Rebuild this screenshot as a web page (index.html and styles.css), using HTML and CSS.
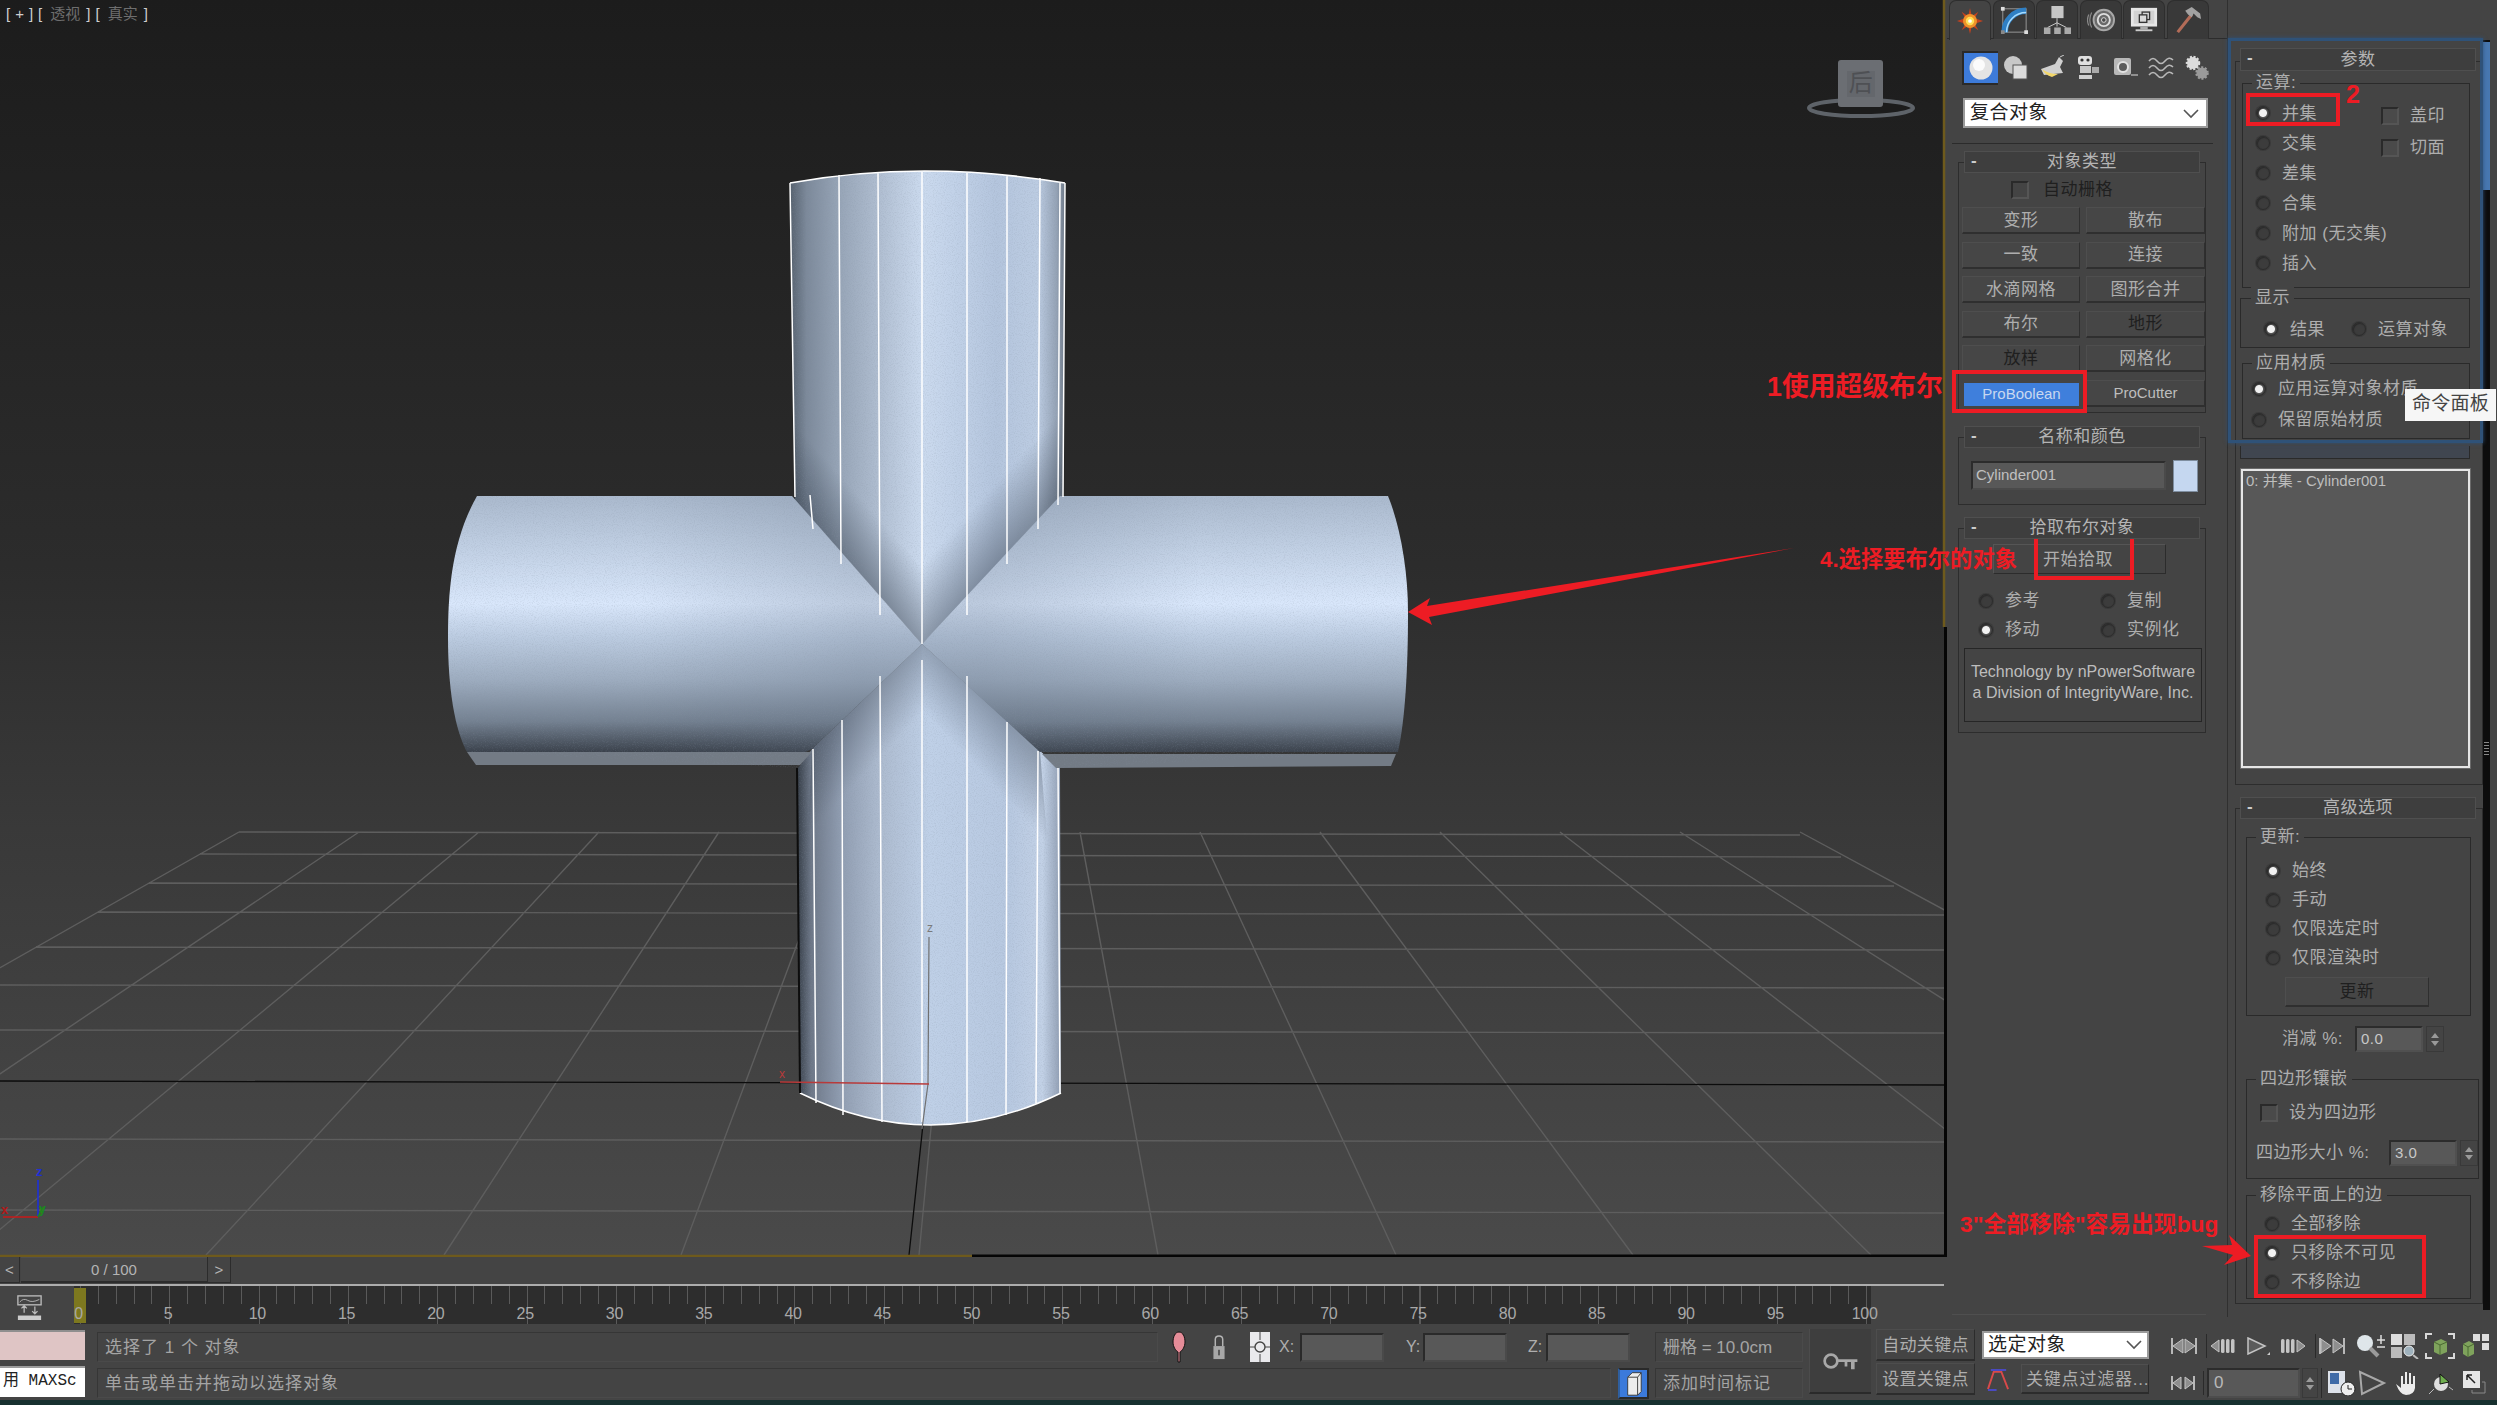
FILE: index.html
```html
<!DOCTYPE html>
<html lang="zh">
<head>
<meta charset="utf-8">
<title>3ds Max ProBoolean</title>
<link rel="stylesheet" href="styles.css">
</head>
<body>
<div class="app">
  <div class="top">
    <div class="left">
      <div class="viewport">
        <svg class="scene" viewBox="0 0 1947 1258" width="1947" height="1258">
          <defs>
            <linearGradient id="bg" x1="0" y1="0" x2="0" y2="1">
              <stop offset="0" stop-color="#1c1c1c"/><stop offset=".45" stop-color="#2c2c2c"/><stop offset=".66" stop-color="#393939"/><stop offset="1" stop-color="#4a4a4a"/>
            </linearGradient>
            <linearGradient id="vtop" gradientUnits="userSpaceOnUse" x1="790" y1="0" x2="1065" y2="0">
              <stop offset="0" stop-color="#56616e"/><stop offset=".06" stop-color="#7c899a"/><stop offset=".17" stop-color="#95a3b5"/><stop offset=".32" stop-color="#afbdd0"/><stop offset=".48" stop-color="#cbdaee"/><stop offset=".58" stop-color="#c3d3e9"/><stop offset=".75" stop-color="#b4c5dd"/><stop offset=".9" stop-color="#bccce2"/><stop offset=".97" stop-color="#94a2b5"/><stop offset="1" stop-color="#6f7a88"/>
            </linearGradient>
            <linearGradient id="vbot" gradientUnits="userSpaceOnUse" x1="798" y1="0" x2="1061" y2="0">
              <stop offset="0" stop-color="#39414b"/><stop offset=".05" stop-color="#6d7787"/><stop offset=".16" stop-color="#8f9cb0"/><stop offset=".3" stop-color="#abb9cd"/><stop offset=".5" stop-color="#bfd0e7"/><stop offset=".8" stop-color="#b7c8e0"/><stop offset=".93" stop-color="#c2d1e6"/><stop offset="1" stop-color="#8f9db2"/>
            </linearGradient>
            <linearGradient id="hcyl" gradientUnits="userSpaceOnUse" x1="0" y1="496" x2="0" y2="752">
              <stop offset="0" stop-color="#aab9cd"/><stop offset=".2" stop-color="#c0cfe3"/><stop offset=".42" stop-color="#d9e7fb"/><stop offset=".55" stop-color="#bccce1"/><stop offset=".72" stop-color="#9dacbf"/><stop offset=".88" stop-color="#748191"/><stop offset="1" stop-color="#3b424c"/>
            </linearGradient>
            <linearGradient id="shadeL" gradientUnits="userSpaceOnUse" x1="857" y1="570" x2="895" y2="536">
              <stop offset="0" stop-color="#2f3946" stop-opacity=".42"/><stop offset="1" stop-color="#2f3946" stop-opacity="0"/>
            </linearGradient>
            <linearGradient id="shadeR" gradientUnits="userSpaceOnUse" x1="990" y1="570" x2="950" y2="534">
              <stop offset="0" stop-color="#2f3946" stop-opacity=".42"/><stop offset="1" stop-color="#2f3946" stop-opacity="0"/>
            </linearGradient>
            <linearGradient id="shadeBL" gradientUnits="userSpaceOnUse" x1="857" y1="706" x2="895" y2="742">
              <stop offset="0" stop-color="#2f3946" stop-opacity=".34"/><stop offset="1" stop-color="#2f3946" stop-opacity="0"/>
            </linearGradient>
            <linearGradient id="shadeBR" gradientUnits="userSpaceOnUse" x1="990" y1="706" x2="952" y2="742">
              <stop offset="0" stop-color="#2f3946" stop-opacity=".34"/><stop offset="1" stop-color="#2f3946" stop-opacity="0"/>
            </linearGradient>
            <linearGradient id="armL" gradientUnits="userSpaceOnUse" x1="640" y1="0" x2="860" y2="0">
              <stop offset="0" stop-color="#59677a" stop-opacity="0"/><stop offset="1" stop-color="#59677a" stop-opacity=".22"/>
            </linearGradient>
            <linearGradient id="armR" gradientUnits="userSpaceOnUse" x1="1200" y1="0" x2="985" y2="0">
              <stop offset="0" stop-color="#59677a" stop-opacity="0"/><stop offset="1" stop-color="#59677a" stop-opacity=".22"/>
            </linearGradient>
            <filter id="grain" x="0" y="0" width="100%" height="100%">
              <feTurbulence type="fractalNoise" baseFrequency=".9" numOctaves="2" seed="3"/>
              <feColorMatrix values="0 0 0 0 .25  0 0 0 0 .3  0 0 0 0 .38  0 0 0 1.6 -.75"/>
            </filter>
            <clipPath id="cross"><path d="M790,183Q922,159 1065,183L1063,497L1388,496C1400,525 1408,570 1408,612C1408,670 1405,720 1398,752L1060,768L1061,1093Q930,1157 800,1093L798,768L467,752C455,730 448,690 448,637C448,590 452,540 477,496L795,497Z"/></clipPath>
          </defs>
          <rect class="bgfill" width="1944" height="1255"/>
          <path class="gridline" d="M239,832L-506,1255M359,832L-269,1255M479,832L-31,1255M599,832L206,1255M719,832L444,1255M839,832L681,1255M959,832L919,1255M1080,832L1158,1255M1200,832L1396,1255M1320,832L1633,1255M1440,832L1871,1255M1560,832L2108,1255M1680,832L2346,1255M1800,832L2583,1255M239,832L1800,835M200,854L1841,857M149,883L1894,886M98,912L1944,915M36,947L1944,950M0,985L1944,988M0,1030L1944,1033M0,1139L1944,1142M0,1210L1944,1213"/>
          <path class="axis" d="M0,1081L1944,1085M924,1115L909,1255"/>
          <path fill="url(#vtop)" d="M790,183Q922,159 1065,183L1063,500L922,644L795,500Z"/>
          <path fill="url(#shadeL)" d="M795,500L922,644L922,171L790,183Z"/>
          <path fill="url(#shadeR)" d="M1063,500L922,644L922,171L1065,183Z"/>
          <path fill="url(#vbot)" d="M812,749L922,644L1040,751L1060,768L1061,1093Q930,1157 800,1093L798,768Z"/>
          <path fill="url(#shadeBL)" d="M812,749L922,644L922,1000L800,1000Z"/>
          <path fill="url(#shadeBR)" d="M1040,751L922,644L922,1000L1060,1000Z"/>
          <path class="strip" d="M467,752L812,752L800,765L476,765Z"/>
          <path class="strip" d="M1042,754L1396,754L1391,766L1056,768Z"/>
          <path fill="url(#hcyl)" d="M477,496L792,496L922,644L812,749L805,752L467,752C455,730 448,690 448,637C448,590 452,540 477,496Z"/>
          <path fill="url(#hcyl)" d="M1060,496L1388,496C1400,525 1408,570 1408,612C1408,670 1405,720 1398,752L1040,752L922,644Z"/>
          <path fill="url(#armL)" d="M640,496L792,496L922,644L812,749L805,752L640,752Z"/>
          <path fill="url(#armR)" d="M1200,496L1060,496L922,644L1040,752L1200,752Z"/>
          <g clip-path="url(#cross)"><rect class="noise" x="440" y="160" width="980" height="980" filter="url(#grain)"/></g>
          <path class="wire" d="M790,183Q922,159 1065,183M790,183L795,497M1065,183L1063,497M810,495L813,529M839,175L841,564M878,173L880,615M922,171L922,644M967,173L967,615M1007,175L1007,564M1040,178L1038,529M1060,183L1058,505M813,749L816,1103M842,720L843,1115M880,676L882,1122M922,660L922,1122M967,676L967,1122M1007,722L1006,1115M1038,751L1036,1103M1058,768L1060,1094M800,1093Q930,1157 1061,1093"/>
          <path class="edge" d="M797,768L800,1093"/>
          <path class="gizmo" d="M929,937L928,1084L922,1129"/>
          <path class="gizmo-x" d="M780,1082L929,1084"/>
          <text class="gizmo-t" x="927" y="932">z</text>
          <text class="gizmo-tx" x="779" y="1078">x</text>
          <path class="ax-z" d="M38,1180V1217"/>
          <path class="ax-x" d="M3,1217H38"/>
          <path class="ax-y" d="M38,1217L43,1207"/>
          <text class="ax-tz" x="36" y="1176">z</text>
          <text class="ax-tx" x="1" y="1214">x</text>
          <text class="ax-ty" x="39" y="1213">y</text>
          <ellipse class="ring" cx="1861" cy="108" rx="52" ry="8"/>
          <rect class="cube" x="1838" y="60" width="45" height="47" rx="3"/>
          <rect class="cube-in" x="1847" y="71" width="28" height="26"/>
          <text class="cube-t" x="1861" y="91">后</text>
          <path class="vp-gold" d="M0,1256H972M1944,0V627"/>
          <path class="vp-black" d="M972,1256H1947M1945.5,627V1257"/>
        </svg>
        <div class="vp-label"><span class="vb">[</span><span class="vb">+</span><span class="vb">]</span><span class="vb">[</span><span class="dim">透视</span><span class="vb">]</span><span class="vb">[</span><span class="dim">真实</span><span class="vb">]</span></div>
      </div>
      <div class="slider">
        <div class="sl-btn sl-l">&lt;</div>
        <div class="sl-track">0 / 100</div>
        <div class="sl-btn sl-r">&gt;</div>
      </div>
      <div class="timeline">
        <div class="tl-icon">
          <svg class="i-tl" viewBox="0 0 28 28"><rect x="1" y="1" width="26" height="10" fill="none" stroke="#bbb" stroke-width="1.5"/><path d="M3,8Q7,3 12,6T25,5" fill="none" stroke="#bbb"/><path d="M8,20V13M5,15L8,12L11,15M20,13V20M17,18L20,21L23,18" fill="none" stroke="#bbb" stroke-width="1.4"/><rect x="1" y="23" width="26" height="5" fill="#ccc"/></svg>
        </div>
        <div class="tl-track">
          <div class="tl-handle"></div>
          <div class="tl-nums"><span>0</span><span>5</span><span>10</span><span>15</span><span>20</span><span>25</span><span>30</span><span>35</span><span>40</span><span>45</span><span>50</span><span>55</span><span>60</span><span>65</span><span>70</span><span>75</span><span>80</span><span>85</span><span>90</span><span>95</span><span>100</span></div>
        </div>
      </div>
    </div>

    <div class="col1">
      <div class="tabs">
        <div class="tab on"><svg class="i-tab" viewBox="0 0 30 30"><polygon points="15,1 17,10 24,5 20,12 29,15 20,18 24,25 17,20 15,29 13,20 6,25 10,18 1,15 10,12 6,5 13,10" fill="#c4421e"/><circle cx="15" cy="15" r="7.5" fill="#f0922a"/><circle cx="15" cy="15" r="4.5" fill="#ffdf55"/><circle cx="15" cy="15" r="2" fill="#fff"/></svg></div>
        <div class="tab"><svg class="i-tab" viewBox="0 0 30 30"><rect x="3" y="3" width="25" height="25" fill="none" stroke="#9c9c9c"/><path d="M5,28A23,23 0 0 1 28,5" fill="none" stroke="#2f7fc4" stroke-width="7"/><path d="M7,28A21,21 0 0 1 28,7" fill="none" stroke="#a6dcff" stroke-width="1.6"/><rect x="1" y="1" width="4" height="4" fill="#ddd"/><rect x="26" y="26" width="4" height="4" fill="#ddd"/><rect x="1" y="26" width="4" height="4" fill="#888"/></svg></div>
        <div class="tab"><svg class="i-tab" viewBox="0 0 30 30"><rect x="9" y="0" width="13" height="13" fill="#c6c6c6"/><path d="M15,13V22M15,18L5,23M15,18L25,23" stroke="#d0d0d0" fill="none"/><rect x="1" y="23" width="7" height="7" fill="#aaa"/><rect x="12" y="23" width="7" height="7" fill="#aaa"/><rect x="23" y="23" width="7" height="7" fill="#aaa"/></svg></div>
        <div class="tab"><svg class="i-tab" viewBox="0 0 30 30"><circle cx="18" cy="15" r="11" fill="#6a6a6a" stroke="#a8a8a8" stroke-width="2"/><circle cx="18" cy="15" r="6.5" fill="none" stroke="#dedede" stroke-width="2"/><circle cx="18" cy="15" r="2.5" fill="#4a4a4a" stroke="#ddd"/><path d="M5,7Q1,15 5,23M2,9Q-1,15 2,21" fill="none" stroke="#8a8a8a" stroke-width="1.3"/></svg></div>
        <div class="tab"><svg class="i-tab" viewBox="0 0 30 30"><rect x="1" y="2" width="28" height="20" fill="#e6e6e6"/><rect x="4" y="5" width="22" height="14" fill="#d2d2d2"/><rect x="13" y="6.500" width="8" height="8" fill="none" stroke="#333" stroke-width="1.4"/><rect x="10" y="9.500" width="8" height="8" fill="#d8d8d8" stroke="#333" stroke-width="1.4"/><rect x="11" y="22" width="8" height="3" fill="#aaa"/><rect x="6" y="25" width="18" height="2" fill="#ccc"/></svg></div>
        <div class="tab"><svg class="i-tab" viewBox="0 0 30 30"><path d="M4,28L19,9" stroke="#b36c58" stroke-width="3.4" fill="none"/><path d="M12,5L19,1L28,8L29,14L25,12L21,8L19,12L15,9Z" fill="#a2a2a2"/></svg></div>
      </div>

      <div class="objrow">
        <div class="obj active"><svg class="i-obj" viewBox="0 0 26 26"><circle cx="13" cy="13" r="11.500" fill="#e4e4e4"/><circle cx="11" cy="10" r="6" fill="#fbfbfb"/></svg></div>
        <div class="obj"><svg class="i-obj" viewBox="0 0 26 26"><circle cx="10" cy="10" r="9" fill="#c8c8c8"/><rect x="10" y="10" width="14" height="14" fill="#dcdcdc" stroke="#555"/></svg></div>
        <div class="obj"><svg class="i-obj" viewBox="0 0 26 26"><path d="M20,2L24,6L21,12L24,18L5,20L2,14L16,9Z" fill="#d0d0d0"/><path d="M3,14Q9,19 19,19L13,22Q6,20 3,14Z" fill="#f2d66a"/><path d="M21,2L25,0" stroke="#ccc"/></svg></div>
        <div class="obj"><svg class="i-obj" viewBox="0 0 26 26"><rect x="3" y="1" width="14" height="9" rx="3" fill="#e0e0e0"/><circle cx="7" cy="5" r="1.600" fill="#333"/><circle cx="13" cy="5" r="1.600" fill="#333"/><rect x="5" y="11" width="11" height="7" fill="#c8c8c8"/><rect x="17" y="12" width="7" height="6" fill="#aaa"/><rect x="4" y="20" width="13" height="4" fill="#cfcfcf"/></svg></div>
        <div class="obj"><svg class="i-obj" viewBox="0 0 26 26"><rect x="2" y="3" width="17" height="17" rx="2" fill="#b8b8b8"/><circle cx="11" cy="12" r="5" fill="#5c5c5c" stroke="#e2e2e2" stroke-width="2"/><path d="M19,20H26" stroke="#aaa" stroke-width="1.500"/></svg></div>
        <div class="obj"><svg class="i-obj" viewBox="0 0 26 26"><path d="M1,6Q5,1 9,6T17,6T25,5M1,13Q5,8 9,13T17,13T25,12M1,20Q5,15 9,20T17,20T25,19" fill="none" stroke="#b8b8b8" stroke-width="1.600"/></svg></div>
        <div class="obj"><svg class="i-obj" viewBox="0 0 26 26"><circle cx="9" cy="8" r="6" fill="#dcdcdc" stroke="#dcdcdc" stroke-width="2.500" stroke-dasharray="2 1.500"/><circle cx="18" cy="18" r="5.500" fill="#9a9a9a" stroke="#9a9a9a" stroke-width="2.500" stroke-dasharray="2 1.500"/></svg></div>
      </div>

      <div class="select sel-main"><span>复合对象</span><svg class="chev" viewBox="0 0 16 10"><path d="M1,1L8,8L15,1" fill="none" stroke="#555" stroke-width="1.600"/></svg></div>
      <div class="hr"></div>

      <div class="rollout r-a">
        <div class="rhead"><b>-</b><span>对象类型</span></div>
        <div class="rbody rb-types">
          <div class="row-auto"><i class="check dark"></i><span class="dk">自动栅格</span></div>
          <div class="btn-grid">
            <div class="btn">变形</div><div class="btn">散布</div>
            <div class="btn">一致</div><div class="btn">连接</div>
            <div class="btn">水滴网格</div><div class="btn">图形合并</div>
            <div class="btn">布尔</div><div class="btn dk">地形</div>
            <div class="btn dk">放样</div><div class="btn">网格化</div>
            <div class="btn blue">ProBoolean</div><div class="btn light">ProCutter</div>
          </div>
        </div>
      </div>

      <div class="rollout r-b">
        <div class="rhead"><b>-</b><span>名称和颜色</span></div>
        <div class="rbody rb-name">
          <div class="namebox">Cylinder001</div>
          <div class="swatch"></div>
        </div>
      </div>

      <div class="rollout r-c">
        <div class="rhead"><b>-</b><span>拾取布尔对象</span></div>
        <div class="rbody rb-pick">
          <div class="pickbtn">开始拾取</div>
          <div class="pick-grid">
            <div class="opt"><i class="radio"></i><span>参考</span></div>
            <div class="opt"><i class="radio"></i><span>复制</span></div>
            <div class="opt"><i class="radio on"></i><span>移动</span></div>
            <div class="opt"><i class="radio"></i><span>实例化</span></div>
          </div>
          <div class="techbox"><p>Technology by nPowerSoftware</p><p>a Division of IntegrityWare, Inc.</p></div>
        </div>
      </div>
      <div class="col1-foot"></div>
    </div>

    <div class="col2">
      <div class="col2-main">
        <div class="rollout r-p">
          <div class="rhead"><b>-</b><span>参数</span></div>
          <div class="rbody rb-params">
            <div class="group g-op">
              <div class="legend">运算:</div>
              <div class="g-split">
                <div class="g-list">
                  <div class="opt h30"><i class="radio on"></i><span>并集</span></div>
                  <div class="opt h30"><i class="radio"></i><span>交集</span></div>
                  <div class="opt h30"><i class="radio"></i><span>差集</span></div>
                  <div class="opt h30"><i class="radio"></i><span>合集</span></div>
                  <div class="opt h30"><i class="radio"></i><span>附加 (无交集)</span></div>
                  <div class="opt h30"><i class="radio"></i><span>插入</span></div>
                </div>
                <div class="g-checks">
                  <div class="chk"><i class="check"></i><span>盖印</span></div>
                  <div class="chk"><i class="check"></i><span>切面</span></div>
                </div>
              </div>
            </div>
            <div class="group g-show">
              <div class="legend">显示</div>
              <div class="g-inline">
                <div class="opt"><i class="radio on"></i><span>结果</span></div>
                <div class="opt"><i class="radio"></i><span>运算对象</span></div>
              </div>
            </div>
            <div class="group g-mat">
              <div class="legend">应用材质</div>
              <div class="opt h31"><i class="radio on"></i><span>应用运算对象材质</span></div>
              <div class="opt h31"><i class="radio"></i><span>保留原始材质</span></div>
            </div>
            <div class="g-stub"></div>
            <div class="listbox">0: 并集 - Cylinder001</div>
          </div>
        </div>

        <div class="rollout r-adv">
          <div class="rhead"><b>-</b><span>高级选项</span></div>
          <div class="rbody rb-adv">
            <div class="group g-upd">
              <div class="legend">更新:</div>
              <div class="g-rows">
                <div class="opt h29"><i class="radio on"></i><span>始终</span></div>
                <div class="opt h29"><i class="radio"></i><span>手动</span></div>
                <div class="opt h29"><i class="radio"></i><span>仅限选定时</span></div>
                <div class="opt h29"><i class="radio"></i><span>仅限渲染时</span></div>
              </div>
              <div class="btn upd dk">更新</div>
            </div>
            <div class="spinrow sr-dec">
              <span class="sp-l">消减 %:</span>
              <div class="spin-in">0.0</div>
              <div class="spin-ar"><i class="up"></i><i class="dn"></i></div>
            </div>
            <div class="group g-quad">
              <div class="legend">四边形镶嵌</div>
              <div class="chk quadchk"><i class="check"></i><span>设为四边形</span></div>
              <div class="spinrow sr-quad">
                <span class="sp-l2">四边形大小 %:</span>
                <div class="spin-in">3.0</div>
                <div class="spin-ar"><i class="up"></i><i class="dn"></i></div>
              </div>
            </div>
            <div class="group g-rem">
              <div class="legend">移除平面上的边</div>
              <div class="g-rows2">
                <div class="opt h29"><i class="radio"></i><span>全部移除</span></div>
                <div class="opt h29"><i class="radio on"></i><span>只移除不可见</span></div>
                <div class="opt h29"><i class="radio"></i><span>不移除边</span></div>
              </div>
            </div>
          </div>
        </div>
      </div>
      <div class="scroll"><div class="thumb"></div><div class="grip"></div></div>
    </div>
  </div>

  <div class="status">
    <div class="macro"><div class="macro-pink"></div><div class="macro-white"><span>用 MAXSc</span></div></div>
    <div class="vsep"></div>
    <div class="st-main">
      <div class="st-row">
        <div class="stbox st-msg">选择了 1 个 对象</div>
        <svg class="i-pin" viewBox="0 0 14 32"><path d="M7,1C11,1 13,6 13,11C13,16 10,20 8,21V31H6V21C4,20 1,16 1,11C1,6 3,1 7,1Z" fill="#e58c98" stroke="#111"/></svg>
        <svg class="i-lock" viewBox="0 0 14 28"><path d="M3,13V6C3,1 11,1 11,6V13" fill="none" stroke="#b4b4b4" stroke-width="1.600"/><rect x="1" y="13" width="12" height="14" fill="#a8a8a8"/><rect x="6" y="17" width="2" height="6" fill="#555"/></svg>
        <svg class="i-sel" viewBox="0 0 20 30"><rect width="20" height="30" fill="#e9e9ec"/><circle cx="10" cy="15" r="5" fill="none" stroke="#444" stroke-width="1.400"/><path d="M10,0V8M10,22V30M0,15H5M15,15H20" stroke="#444"/></svg>
        <span class="xyz xl">X:</span><div class="xyzin"></div>
        <span class="xyz yl">Y:</span><div class="xyzin"></div>
        <span class="xyz zl">Z:</span><div class="xyzin"></div>
        <div class="stbox st-grid">栅格 = 10.0cm</div>
      </div>
      <div class="st-row st-row2">
        <div class="stbox st-prompt">单击或单击并拖动以选择对象</div>
        <div class="tagbtn"><svg class="i-tag" viewBox="0 0 20 30"><path d="M3,8L8,3H18V24L14,28H3Z" fill="#ececec" stroke="#333"/><path d="M3,8H14V28M14,8L18,3" fill="none" stroke="#333"/></svg></div>
        <div class="stbox st-tag">添加时间标记</div>
      </div>
    </div>
    <div class="keybtn"><svg class="i-key" viewBox="0 0 40 22"><circle cx="9" cy="11" r="7" fill="none" stroke="#a8a8a8" stroke-width="3"/><path d="M16,9H38V12H35V20H31V12H27V17H24V12H16Z" fill="#a8a8a8"/></svg></div>
    <div class="keycol">
      <div class="keylbl">自动关键点</div>
      <div class="keylbl">设置关键点</div>
    </div>
    <div class="filtercol">
      <div class="select sel-key"><span>选定对象</span><svg class="chev" viewBox="0 0 16 10"><path d="M1,1L8,8L15,1" fill="none" stroke="#555" stroke-width="1.600"/></svg></div>
      <div class="filter-row">
        <svg class="i-curve" viewBox="0 0 28 24"><path d="M3,22L9,4H17L24,22" fill="none" stroke="#d84a4a" stroke-width="2"/><path d="M6,2H22M3,23H12" stroke="#4a4ac0" stroke-width="2"/></svg>
        <div class="filterbtn">关键点过滤器...</div>
      </div>
    </div>
    <div class="pb">
      <div class="pb-row">
        <svg class="pb1" viewBox="0 0 26 18"><path d="M1,1V17M25,1V17" stroke="#b8b8b8" stroke-width="2"/><path d="M2,9L12,2V16ZM24,9L14,2V16Z" fill="#8e8e8e" stroke="#c4c4c4"/></svg>
        <div class="pbsep"></div>
        <svg class="pb1" viewBox="0 0 26 18"><path d="M1,9L9,3V15Z" fill="#8e8e8e" stroke="#c4c4c4"/><rect x="11" y="2" width="3.500" height="14" rx="1.500" fill="#c4c4c4"/><rect x="16" y="2" width="3.500" height="14" rx="1.500" fill="#c4c4c4"/><rect x="21" y="2" width="3.500" height="14" rx="1.500" fill="#c4c4c4"/></svg>
        <svg class="pb1" viewBox="0 0 26 18"><path d="M3,1L20,9L3,17Z" fill="#5c5c5c" stroke="#c4c4c4" stroke-width="1.500"/><path d="M25,15L22,18H25Z" fill="#ccc"/></svg>
        <svg class="pb1" viewBox="0 0 26 18"><rect x="1" y="2" width="3.500" height="14" rx="1.500" fill="#c4c4c4"/><rect x="6" y="2" width="3.500" height="14" rx="1.500" fill="#c4c4c4"/><rect x="11" y="2" width="3.500" height="14" rx="1.500" fill="#c4c4c4"/><path d="M17,3L25,9L17,15Z" fill="#8e8e8e" stroke="#c4c4c4"/></svg>
        <div class="pbsep"></div>
        <svg class="pb1 pb-last" viewBox="0 0 26 18"><path d="M1,1V17M25,1V17" stroke="#b8b8b8" stroke-width="2"/><path d="M2,2L12,9L2,16ZM24,9L14,2V16Z" fill="#8e8e8e" stroke="#c4c4c4"/></svg>
        <svg class="pb2" viewBox="0 0 30 26"><circle cx="10" cy="10" r="8" fill="#dfe6ea"/><path d="M15,15L23,23" stroke="#9a9a9a" stroke-width="4"/><path d="M22,7H30M26,2V11M22,14H30" stroke="#ddd" stroke-width="1.500"/></svg>
        <svg class="pb2" viewBox="0 0 30 26"><rect x="1" y="1" width="11" height="11" fill="#ddd"/><rect x="14" y="1" width="11" height="11" fill="#bbb"/><rect x="1" y="14" width="11" height="11" fill="#bbb"/><circle cx="19" cy="18" r="5" fill="#9fb2bd" stroke="#eee"/><path d="M23,22L28,26" stroke="#bbb" stroke-width="2"/></svg>
        <svg class="pb2" viewBox="0 0 30 26"><path d="M1,6V1H7M23,1H29V6M1,20V25H7M23,25H29V20" fill="none" stroke="#d8d8d8" stroke-width="2"/><path d="M9,9L16,6L22,9V19L15,22L9,19Z" fill="#7fa35c"/><path d="M9,9L15,12L22,9M15,12V22" stroke="#4a6a32" fill="none"/></svg>
        <svg class="pb2" viewBox="0 0 30 26"><rect x="13" y="1" width="7" height="7" fill="#ddd"/><rect x="22" y="1" width="7" height="7" fill="#ddd"/><rect x="22" y="10" width="7" height="7" fill="#ddd"/><path d="M3,11L9,8L14,11V21L8,24L3,21Z" fill="#7fa35c"/><path d="M3,11L8,14L14,11M8,14V24" stroke="#4a6a32" fill="none"/></svg>
      </div>
      <div class="pb-row pb-row2">
        <svg class="pb3" viewBox="0 0 24 16"><path d="M1,1V15M23,1V15" stroke="#b8b8b8" stroke-width="2"/><path d="M2,8L10,2V14ZM22,8L14,2V14Z" fill="#8e8e8e" stroke="#c4c4c4"/></svg>
        <div class="pbsep"></div>
        <div class="frame">0</div>
        <div class="spin-ar sp-frame"><i class="up"></i><i class="dn"></i></div>
        <div class="pbsep sep2"></div>
        <svg class="pb2 pb-first" viewBox="0 0 30 26"><rect x="1" y="1" width="17" height="22" fill="#dde2ea"/><rect x="3" y="3" width="9" height="11" fill="#3f6ba8"/><circle cx="21" cy="19" r="7" fill="#eee" stroke="#222"/><path d="M21,15V19H25" stroke="#222" fill="none"/></svg>
        <svg class="pb2" viewBox="0 0 30 26"><path d="M3,2L27,13L5,24Z" fill="none" stroke="#a8a8a8" stroke-width="2"/></svg>
        <svg class="pb2" viewBox="0 0 30 26"><path d="M4,14L9,18V6H11V14H13V2H15V14H17V3H19V14H21V6H23V18Q22,25 14,25Q8,25 4,14Z" fill="#ececec"/></svg>
        <svg class="pb2" viewBox="0 0 30 26"><circle cx="14" cy="14" r="7" fill="#dedede"/><path d="M13,4L22,12L13,14Z" fill="#6fae4e" stroke="#111"/><path d="M2,24L7,19M26,20L22,17" stroke="#bbb"/></svg>
        <svg class="pb2" viewBox="0 0 30 26"><rect x="1" y="1" width="17" height="17" fill="#e6e6e6"/><path d="M5,5L13,13M5,5H10M5,5V10" stroke="#222" stroke-width="1.500" fill="none"/><path d="M20,12H23V23H10V20" fill="none" stroke="#888"/></svg>
      </div>
    </div>
  </div>
  <div class="strip-bottom"></div>

  <div class="glow"></div>
  <div class="tooltip">命令面板</div>
  <div class="mark m-bool"></div>
  <div class="mark m-pick"></div>
  <div class="mark m-union"></div>
  <div class="mark m-rem"></div>
  <div class="note n1">1使用超级布尔</div>
  <div class="note n2">2</div>
  <div class="note n3">3"全部移除"容易出现bug</div>
  <div class="note n4">4.选择要布尔的对象</div>
  <svg class="arrows" viewBox="0 0 2497 1405" width="2497" height="1405">
    <path d="M1408,612L1430,598L1427,606L1794,548L1429,617L1432,625Z"/>
    <path d="M2251,1256L2229,1235L2232,1245L2202,1246L2233,1255L2224,1265Z"/>
  </svg>
</div>
</body>
</html>
```
FILE: styles.css
```css
*{box-sizing:border-box}
html,body{margin:0;padding:0;background:#444}
body{font-family:"Liberation Sans","Noto Sans CJK SC",sans-serif;font-size:17px;letter-spacing:.5px;color:#aeaeae;line-height:1.2}
.app{position:relative;width:2497px;height:1405px;overflow:hidden;background:#444}
i{display:block;flex:none}
svg{display:block;flex:none}

/* overall */
.top{display:flex;height:1326px}
.left{width:1947px;flex:none}
.col1{width:280px;flex:none;position:relative}
.col2{width:270px;flex:none;display:flex;border-left:1px solid #303030;height:1317px}
.col2-main{width:254px;flex:none}

/* viewport */
.viewport{position:relative;height:1257px;overflow:hidden}
.scene{position:absolute;left:0;top:0}
.bgfill{fill:url(#bg)}
.gridline{fill:none;stroke:#5e5e5e;stroke-width:1.4}
.axis{fill:none;stroke:#0c0c0c;stroke-width:1.3}
.strip{fill:#737b85}
.wire{fill:none;stroke:#fff;stroke-width:1.500}
.edge{fill:none;stroke:#0d0d0d;stroke-width:2}
.noise{opacity:.32}
.gizmo{fill:none;stroke:#707070;stroke-width:1.200}
.gizmo-x{fill:none;stroke:#b83a3a;stroke-width:1.500}
.gizmo-t{fill:#7a7a7a;font-size:12px}
.gizmo-tx{fill:#b83a3a;font-size:12px}
.ax-z{stroke:#1a2ee0;stroke-width:1.500}
.ax-x{stroke:#c81818;stroke-width:1.500}
.ax-y{stroke:#1c8a1c;stroke-width:1.500}
.ax-tz{fill:#2030d8;font-size:13px;font-weight:700}
.ax-tx{fill:#b01818;font-size:13px;font-weight:700}
.ax-ty{fill:#1c8a1c;font-size:12px;font-weight:700}
.ring{fill:#1c1c1c;stroke:#5e6369;stroke-width:4}
.cube{fill:#6b6e73}
.cube-in{fill:#64676c}
.cube-t{fill:#4e5054;font-size:24px;text-anchor:middle}
.vp-gold{fill:none;stroke:#6e5a1c;stroke-width:2.500}
.vp-black{fill:none;stroke:#050505;stroke-width:3}
.vp-label{position:absolute;left:6px;top:5px;display:flex;font-size:15px;line-height:18px;letter-spacing:0;color:#cfcfcf}
.vb{margin-right:5px}
.dim{color:#6e6e6e;letter-spacing:0;margin:0 6px 0 3px}

/* time slider */
.slider{display:flex;height:27px;padding-bottom:1px;font-size:15px;letter-spacing:0;border-bottom:0}
.sl-btn{border-right:1px solid #2c2c2c;border-bottom:1px solid #2c2c2c;display:flex;align-items:center;justify-content:center;color:#b4b4b4;font-size:15px}
.sl-l{width:20px}
.sl-r{width:24px;border-left:1px solid #2c2c2c}
.sl-track{width:186px;margin-left:1px;border-bottom:2px solid #2c2c2c;border-top:1px solid #4e4e4e;display:flex;align-items:center;justify-content:center;background:#474747;color:#b4b4b4}

/* timeline */
.timeline{display:flex;height:42px;border-top:2px solid #adadad;width:1944px}
.tl-icon{width:74px;flex:none;padding:9px 0 0 16px}
.i-tl{width:27px;height:25px}
.tl-track{position:relative;width:1797px;flex:none;height:38px;background:
  repeating-linear-gradient(90deg,#5a5a5a 0 1px,transparent 1px 89.3px) 5.700px 0/100% 100% no-repeat,
  repeating-linear-gradient(90deg,#5a5a5a 0 1px,transparent 1px 17.860px) 5.700px 0/100% 18px no-repeat,
  #2d2d2d}
.tl-handle{position:absolute;left:0;top:2px;width:12px;height:35px;background:#7d781f}
.tl-nums{position:relative;display:flex;margin-left:-40px;padding-top:18px;font-size:16px;letter-spacing:-.3px;line-height:20px;color:#a8a8a8}
.tl-nums span{width:89.300px;flex:none;text-align:center}

/* tabs */
.tabs{display:flex;gap:1.500px;height:39px;padding-left:2px;border-bottom:1px solid #2c2c2c;margin-left:0}
.tab{width:42px;height:39px;background:#393939;border-radius:7px 7px 0 0;border:1px solid #2e2e2e;border-bottom:0;display:flex;align-items:center;justify-content:center}
.tab.on{background:#444;height:40px;position:relative}
.i-tab{width:28px;height:28px}

/* object row */
.objrow{display:flex;margin:12px 0 0 15px;height:34px}
.obj{width:36.200px;height:34px;flex:none;display:flex;align-items:center;justify-content:center}
.obj.active{background:#3d7bda;border:2px solid #2a2a2a;border-right:0;width:36px}
.i-obj{width:26px;height:26px}

/* select */
.select{background:#fff;border:2px solid #9a9a9a;color:#222;display:flex;align-items:center;justify-content:space-between;padding:1px 7px 0 5px;font-size:19px;letter-spacing:.5px}
.sel-main{width:245px;height:30px;margin:13px 0 0 16px}
.chev{width:16px;height:10px}
.hr{height:1px;margin:15px 0 0 5px;width:261px;background:#2b2b2b}

/* rollouts */
.rollout{position:relative}
.r-a{margin:7px 0 0 11px;width:248px}
.r-b{margin:13px 0 0 11px;width:248px}
.r-c{margin:12px 0 0 11px;width:248px}
.rhead{position:relative;z-index:1;margin-left:6px;width:236px;height:22px;background:#3e3e3e;border:1px solid #4f4f4f;display:flex;align-items:center;justify-content:center;font-size:17px;color:#b4b4b4;padding-top:1px}
.rhead b{position:absolute;left:6px;top:0;line-height:17px;font-weight:700;color:#ccc}
.rbody{margin-top:-11px;border:1px solid #2d2d2d;border-top-color:#2d2d2d;padding-top:11px}
.rb-types{height:251px}
.rb-name{height:68px;display:flex;padding:23px 0 0 12px}
.rb-pick{height:205px}
.row-auto{display:flex;align-items:center;margin:7px 0 0 52px;height:18px;gap:14px}
.dk{color:#1f1f1f}
.btn-grid{display:grid;grid-template-columns:118px 119px;column-gap:6px;row-gap:7.500px;grid-auto-rows:27px;margin:8px 0 0 3px}
.btn{display:flex;align-items:center;justify-content:center;background:#464646;border-top:1px solid #4e4e4e;border-left:1px solid #4e4e4e;border-right:1px solid #2f2f2f;border-bottom:2px solid #2f2f2f;font-size:17px;padding-top:2px}
.btn.dk{color:#1f1f1f}
.btn.blue{background:#3f7fdc;color:#c8d8f0;font-size:15px;letter-spacing:0;margin:3px 1px 1px 2px;border:0;padding-top:0}
.btn.light{font-size:15px;letter-spacing:0;color:#bdbdbd;padding-top:0}
.check{width:18px;height:18px;border:2px solid #2a2a2a;border-right-color:#555;border-bottom-color:#555;background:#4a4a4a}
.check.dark{background:#444}
.namebox{width:195px;height:29px;background:#585858;border:2px solid #2c2c2c;border-right-color:#4a4a4a;border-bottom-color:#4a4a4a;padding-left:3px;line-height:24px;font-size:15px;letter-spacing:0;color:#c0c0c0}
.swatch{width:25px;height:32px;margin:-1px 0 0 7px;background:#c5d7f0;border:1px solid #7f8ea0}

.pickbtn{width:173px;height:30px;margin:4px 0 0 34px;border:1px solid #2c2c2c;border-left-color:#555;border-top-color:#555;padding-left:49px;line-height:29px}
.pick-grid{display:grid;grid-template-columns:122px 1fr;grid-auto-rows:29px;margin:12px 0 0 20px}
.techbox{width:238px;height:74px;margin:4px 0 0 5px;border:1px solid #262626;font-size:16px;letter-spacing:0;color:#bdbdbd;padding-top:12px;text-align:center;line-height:21px}
.techbox p{margin:0}
.col1-foot{position:absolute;left:5px;top:1314px;width:254px;height:1px;background:#4f4f4f}

/* options */
.opt{display:flex;align-items:center;gap:12px}
.opt span{padding-top:2px;white-space:nowrap}
.radio{width:14px;height:14px;border-radius:50%;background:#3c3c3c;border:1px solid #2c2c2c;box-shadow:0 0 0 1px #3a3a3a,inset 1px 1px 1px #2a2a2a}
.radio.on{background:radial-gradient(circle,#f2f2f2 0 3.500px,#555 4.500px,#3c3c3c 6px)}
.h29{height:29px}.h30{height:30px}.h31{height:31px}
.chk{display:flex;align-items:center;gap:11px}

/* param rollout */
.r-p{margin:48px 0 0 7px;width:248px}
.r-adv{margin:12px 0 0 7px;width:248px}
.r-p .rhead,.r-adv .rhead{margin-left:5px}
.r-p .rhead{height:23px}
.rb-params{height:724px;margin-top:-10px;padding-top:10px}
.rb-adv{height:496px}
.group{border:1px solid #2a2a2a;position:relative}
.legend{display:table;margin:-12px 0 0 9px;padding:0 4px;line-height:22px;background:#444}
.g-op{margin:11px 0 0 6px;width:228px;height:205px}
.g-split{display:flex;margin-top:4px;padding-left:13px}
.g-list{width:125px;flex:none}
.g-checks{padding-top:2px}
.g-checks .chk{height:32px;margin-bottom:0}
.g-show{margin:10px 0 0 4px;width:230px;height:50px}
.g-show .legend{margin-left:10px}
.g-inline{display:flex;gap:27px;padding:9px 0 0 23px}
.g-mat{margin:15px 0 0 6px;width:228px;height:76px}
.g-mat .opt{padding-left:9px}
.g-mat .legend{margin-bottom:-1px}
.g-stub{margin:7px 0 0 4px;width:230px;height:13px;border:1px solid #2a2a2a;border-top:0;background:#404650}
.listbox{margin:10px 0 0 5px;width:229px;height:299px;background:#585858;border:2px solid #e6e6e6;outline:1px solid #6a6a6a;padding:1px 3px;font-size:15px;letter-spacing:0;color:#bdbdbd}

.g-upd{margin:17px 0 0 10px;width:225px;height:179px}
.g-rows{margin-top:8px;padding-left:19px}
.g-upd .opt{gap:12px}
.btn.upd{width:144px;height:30px;margin:5px 0 0 38px}
.spinrow{display:flex;align-items:center;height:26px}
.sr-dec{margin:10px 0 0 46px}
.sp-l{width:73px}
.spin-in{width:68px;height:26px;background:#585858;border:2px solid #2c2c2c;border-right-color:#505050;border-bottom-color:#505050;padding-left:4px;line-height:22px;color:#c8c8c8;font-size:15px}
.spin-ar{width:18px;height:26px;margin-left:3px;display:flex;flex-direction:column;border:1px solid #393939;justify-content:center;gap:3px;align-items:center}
.spin-ar .up,.spin-ar .dn{width:0;height:0;border-left:4px solid transparent;border-right:4px solid transparent}
.spin-ar .up{border-bottom:5px solid #9a9a9a}
.spin-ar .dn{border-top:5px solid #9a9a9a}
.g-quad{margin:27px 0 0 10px;width:233px;height:100px}
.quadchk{margin:14px 0 0 13px;height:18px}
.sr-quad{margin:18px 0 0 9px}
.sp-l2{width:133px}
.g-rem{margin:16px 0 0 10px;width:225px;height:104px}
.g-rows2{margin-top:3px;padding-left:18px}

/* scrollbar */
.scroll{position:relative;width:7px;flex:none;margin-left:1px;margin-top:40px;background:#0d0d0d;height:1270px}
.thumb{height:148px;margin-top:2px;background:#4878b0}
.grip{position:absolute;left:1px;top:702px;width:5px;height:14px;background:repeating-linear-gradient(#888 0 1px,transparent 1px 3px)}

/* status bar */
.status{display:flex;height:74px;border-top:0}
.macro{width:85px;flex:none}
.macro-pink{height:30px;margin-top:4px;background:#dfc5c5;border-top:2px solid #8f8f8f}
.macro-white{height:31px;margin-top:6px;background:#fff;border-top:2px solid #9c9c9c;overflow:hidden;white-space:nowrap;font-family:"Liberation Mono","Noto Sans CJK SC",monospace;font-size:16px;letter-spacing:0;color:#222;line-height:27px}
.macro-white span{display:block;margin-left:3px}
.vsep{width:1px;background:#303030;margin:2px 0 0 9px}
.st-main{margin:6px 0 0 3px;width:1706px;flex:none}
.st-row{display:flex;align-items:center;height:30px}
.st-row2{margin-top:6px}
.stbox{height:30px;border:1px solid #363636;border-right-color:#4a4a4a;border-bottom-color:#4a4a4a;padding:2px 0 0 7px;display:flex;align-items:center;white-space:nowrap;color:#a4a4a4;letter-spacing:1px}
.st-msg{width:1061px}
.i-pin{width:14px;height:32px;margin-left:14px}
.i-lock{width:14px;height:26px;margin-left:26px}
.i-sel{width:20px;height:30px;margin-left:24px}
.xyz{font-size:16px;letter-spacing:0}
.xl{margin-left:9px;width:21px}
.yl{margin-left:22px;width:17px}
.zl{margin-left:21px;width:18px}
.xyzin{width:84px;height:29px;background:#585858;border:2px solid #2a2a2a;border-right-color:#4a4a4a;border-bottom-color:#4a4a4a}
.st-grid{width:148px;margin-left:25px;letter-spacing:0}
.st-prompt{width:1514px}
.tagbtn{width:31px;height:31px;margin-left:7px;background:#3b7adb;border:2px solid #2a2a2a;border-left-color:#2f5f9f;display:flex;align-items:center;justify-content:center}
.i-tag{width:18px;height:27px}
.st-tag{width:148px;margin-left:6px}
.keybtn{width:62px;height:65px;margin:3px 0 0 6px;background:#3e3e3e;border-bottom:2px solid #2a2a2a;border-left:1px solid #4c4c4c;display:flex;align-items:center;justify-content:center;flex:none}
.i-key{width:38px;height:20px}
.keycol{margin:3px 0 0 5px;width:99px;flex:none}
.keylbl{height:32px;margin-bottom:2px;border:1px solid #4d4d4d;border-right-color:#2c2c2c;border-bottom:2px solid #2c2c2c;display:flex;align-items:center;justify-content:center;font-size:17px;letter-spacing:.3px;padding-top:3px}
.filtercol{margin:5px 0 0 7px;width:167px;flex:none}
.sel-key{height:28px;padding:0 5px 0 4px}
.filter-row{display:flex;margin-top:5px;align-items:center}
.i-curve{width:27px;height:23px;margin-left:3px}
.filterbtn{width:128px;height:30px;margin-left:9px;border:1px solid #4f4f4f;border-right-color:#2c2c2c;border-bottom:2px solid #2c2c2c;padding-left:4px;line-height:29px;white-space:nowrap;overflow:hidden;letter-spacing:.8px}
.pb{margin:8px 0 0 22px;flex:none}
.pb-row{display:flex;align-items:center;height:24px}
.pb-row2{margin-top:10px;height:30px}
.pb1{width:26px;height:18px;margin-right:9px}
.pb-last{margin-right:10px}
.pb2{width:30px;height:26px;margin-right:5px}
.pb-first{margin-right:0}
.pb3{width:24px;height:16px;margin-left:0;margin-right:8px}
.pbsep{width:1px;height:24px;background:#2a2a2a;margin:0 3px 0 0}
.frame{width:93px;height:30px;background:#585858;border:2px solid #2c2c2c;border-right-color:#4d4d4d;border-bottom-color:#4d4d4d;padding-left:5px;line-height:26px;color:#b8b8b8}
.sp-frame{width:16px;height:30px;margin-left:2px}
.sep2{margin:0 5px 0 3px;height:30px}
.strip-bottom{height:5px;background:#17302f}

/* overlays */
.glow{position:absolute;left:2228px;top:38px;width:255px;height:405px;border:3px solid #2f5278;pointer-events:none;box-shadow:0 0 4px #2f5278}
.tooltip{position:absolute;left:2405px;top:389px;width:91px;height:32px;background:#f6f6f6;color:#444;font-size:19px;line-height:30px;text-align:center;letter-spacing:.3px}
.mark{position:absolute;border:4px solid #ed1c24;pointer-events:none}
.m-bool{left:1952px;top:370px;width:135px;height:43px}
.m-pick{left:2034px;top:535px;width:100px;height:45px}
.m-union{left:2246px;top:93px;width:94px;height:33px}
.m-rem{left:2254px;top:1235px;width:172px;height:63px}
.note{position:absolute;color:#ed1c24;font-weight:700;letter-spacing:0;white-space:nowrap}
.n1{left:1767px;top:371px;font-size:26.800px;line-height:32px}
.n2{left:2346px;top:80px;font-size:25px;line-height:28px}
.n3{left:1960px;top:1210px;font-size:22.800px;line-height:28px}
.n4{left:1820px;top:546px;font-size:22.300px;line-height:27px}
.arrows{position:absolute;left:0;top:0;pointer-events:none}
.arrows path{fill:#ed1c24}
```
